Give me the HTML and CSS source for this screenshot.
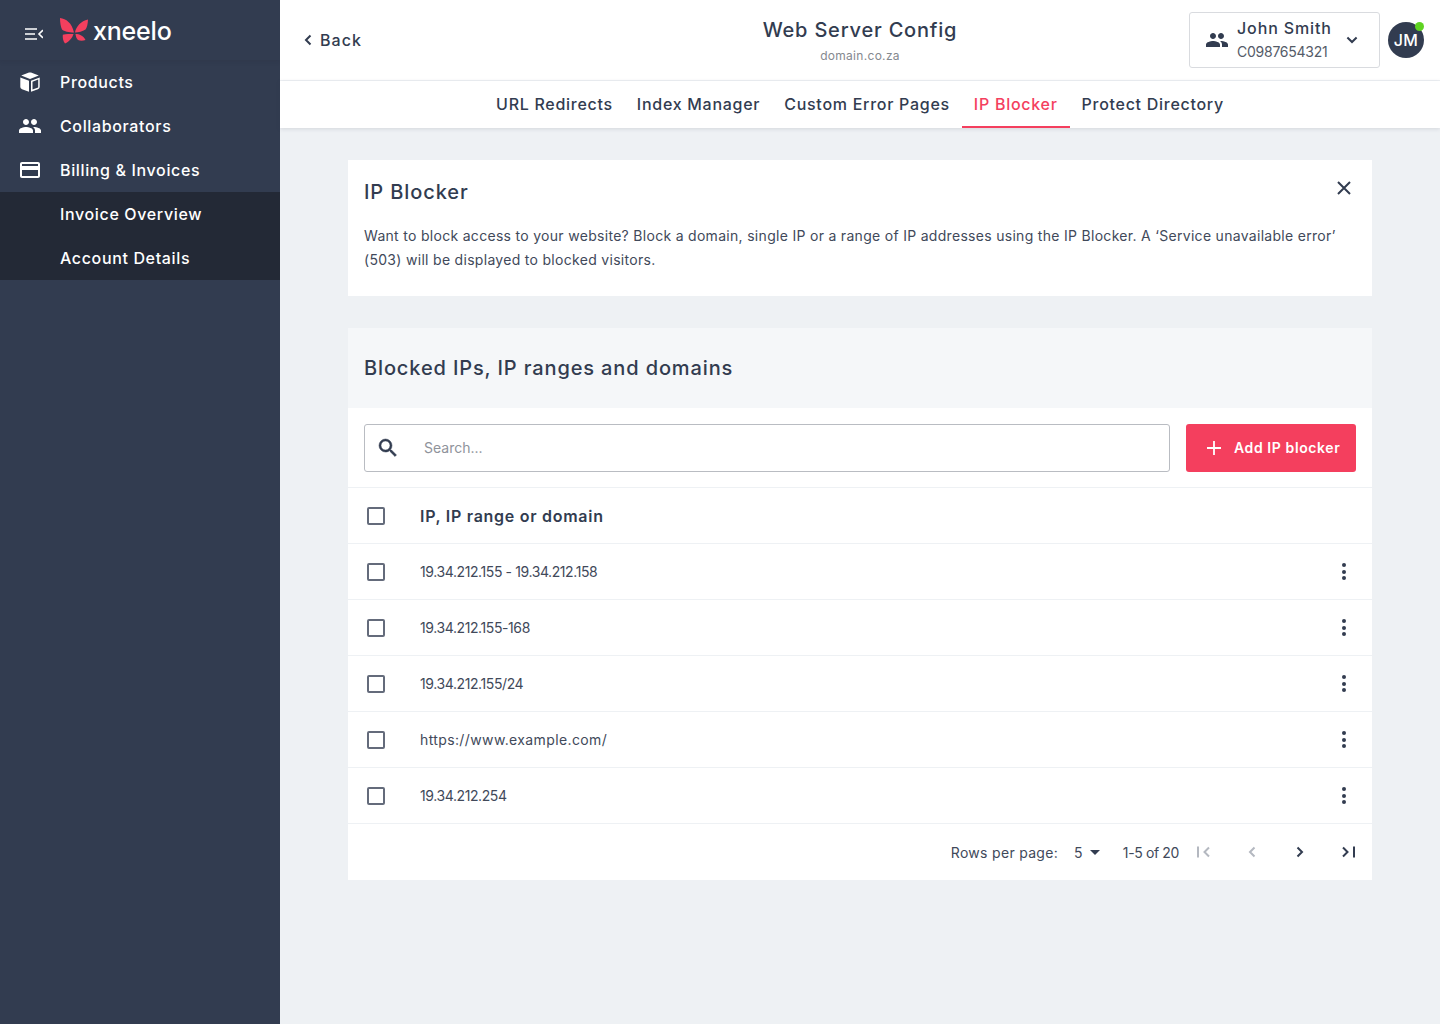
FILE: index.html
```html
<!DOCTYPE html>
<html lang="en">
<head>
<meta charset="utf-8">
<title>IP Blocker</title>
<link rel="stylesheet" href="styles.css">
</head>
<body>
<div class="app">
  <aside class="sidebar">
    <div class="brand">
      <svg class="menu-icon" width="18" height="12" viewBox="0 0 18 12"><path d="M0 1h12M0 6h10M0 11h12" stroke="#fff" stroke-width="1.6" fill="none"/><path d="M18 2.200 14 6l4 3.800" stroke="#fff" stroke-width="1.6" fill="none"/></svg>
      <svg class="logo-mark" width="29" height="27" viewBox="0 0 29 27"><path d="M0 1C6 1.500 12 6 14 15.500 9 15.500 4 14.500 2 12.500 .8 9.500 0 6 0 1zM28 2.500C27.800 7 27 10.500 25.500 12.500 22.500 14.500 18.500 15.500 15 15.500 16 9.500 21 4 28 2.500zM13.500 17C12.500 20.500 9.500 24.500 5 26.500 3 24 2.500 20.500 2.800 17.800 6 17 10 17 13.500 17zM15.500 17C19.500 17 23.500 18.800 25.500 23 23 24 20 24 18 23 16.500 21.500 15.800 19.500 15.500 17z" fill="#f43f5e"/></svg>
      <span class="logo-text">xneelo</span>
    </div>
    <nav class="nav">
      <a class="nav-item">
        <svg class="nav-icon cube" width="20" height="20" viewBox="0 0 20 20"><path d="M9 .6Q10 .2 11 .6L18.800 3.600 10 7 1.200 3.600z" fill="#fff"/><path d="M.3 5.500 9 8.800V19.800L2 17.200Q.3 16.500.3 15z" fill="#fff"/><path d="M11 8.800 19.700 5.500V15q0 1.500-1.700 2.200L11 19.800zm1.500 1v7.800l5.700-2V7.600z" fill="#fff"/></svg>
        <span>Products</span>
      </a>
      <a class="nav-item">
        <svg class="nav-icon" width="24" height="24" viewBox="0 0 24 24"><path fill="#fff" d="M16 11c1.660 0 2.990-1.340 2.990-3S17.660 5 16 5s-3 1.340-3 3 1.340 3 3 3zm-8 0c1.660 0 2.990-1.340 2.990-3S9.660 5 8 5 5 6.340 5 8s1.340 3 3 3zm0 2c-2.330 0-7 1.170-7 3.500V19h14v-2.500c0-2.330-4.670-3.500-7-3.500zm8 0c-.29 0-.62.020-.97.050 1.160.84 1.970 1.970 1.970 3.450V19h6v-2.500c0-2.330-4.670-3.500-7-3.500z"/></svg>
        <span>Collaborators</span>
      </a>
      <a class="nav-item">
        <svg class="nav-icon" width="24" height="24" viewBox="0 0 24 24"><path fill="#fff" d="M20 4H4c-1.110 0-2 .89-2 2v12c0 1.110.89 2 2 2h16c1.110 0 2-.89 2-2V6c0-1.110-.89-2-2-2zm0 14H4v-6h16v6zm0-10H4V6h16v2z"/></svg>
        <span>Billing &amp; Invoices</span>
      </a>
      <div class="subnav">
        <a class="nav-item sub">Invoice Overview</a>
        <a class="nav-item sub">Account Details</a>
      </div>
    </nav>
  </aside>
  <main class="main">
    <header class="topbar">
      <a class="back">
        <svg width="24" height="24" viewBox="0 0 24 24"><path d="M14.500 7.500 10 12l4.500 4.500" stroke="#323c50" stroke-width="2" fill="none"/></svg>
        <span>Back</span>
      </a>
      <div class="title-block">
        <h1>Web Server Config</h1>
        <p>domain.co.za</p>
      </div>
      <div class="account">
        <button class="account-picker">
          <svg width="24" height="24" viewBox="0 0 24 24"><path fill="#323c50" d="M16 11c1.660 0 2.990-1.340 2.990-3S17.660 5 16 5s-3 1.340-3 3 1.340 3 3 3zm-8 0c1.660 0 2.990-1.340 2.990-3S9.660 5 8 5 5 6.340 5 8s1.340 3 3 3zm0 2c-2.330 0-7 1.170-7 3.500V19h14v-2.500c0-2.330-4.670-3.500-7-3.500zm8 0c-.29 0-.62.020-.97.050 1.160.84 1.970 1.970 1.970 3.450V19h6v-2.500c0-2.330-4.670-3.500-7-3.500z"/></svg>
          <span class="account-text"><strong>John Smith</strong><small>C0987654321</small></span>
          <svg width="24" height="24" viewBox="0 0 24 24"><path d="M7.400 9.500 12 14l4.600-4.500" stroke="#323c50" stroke-width="2" fill="none"/></svg>
        </button>
        <div class="avatar">JM<i class="status"></i></div>
      </div>
    </header>
    <nav class="tabs">
      <a class="tab">URL Redirects</a>
      <a class="tab">Index Manager</a>
      <a class="tab">Custom Error Pages</a>
      <a class="tab active">IP Blocker</a>
      <a class="tab">Protect Directory</a>
    </nav>
    <div class="content">
      <section class="card intro">
        <div class="intro-head">
          <h2>IP Blocker</h2>
          <svg class="close" width="24" height="24" viewBox="0 0 24 24"><path d="M6 6l12 12M18 6 6 18" stroke="#323c50" stroke-width="2" fill="none"/></svg>
        </div>
        <p>Want to block access to your website? Block a domain, single IP or a range of IP addresses using the IP Blocker. A ‘Service unavailable error’ (503) will be displayed to blocked visitors.</p>
      </section>
      <section class="card table-card">
        <div class="table-title"><h2>Blocked IPs, IP ranges and domains</h2></div>
        <div class="toolbar">
          <label class="search">
            <svg width="24" height="24" viewBox="0 0 24 24"><path fill="#323c50" stroke="#323c50" stroke-width=".5" d="M15.500 14h-.79l-.28-.27A6.470 6.470 0 0 0 16 9.500 6.500 6.500 0 1 0 9.500 16c1.610 0 3.090-.59 4.230-1.570l.27.28v.79l5 4.990L20.490 19l-4.990-5zm-6 0C7.010 14 5 11.990 5 9.500S7.010 5 9.500 5 14 7.010 14 9.500 11.990 14 9.500 14z"/></svg>
            <input class="search-input" placeholder="Search...">
          </label>
          <button class="add-btn">
            <svg width="24" height="24" viewBox="0 0 24 24"><path d="M12 5v14M5 12h14" stroke="#fff" stroke-width="1.800" fill="none"/></svg>
            <span>Add IP blocker</span>
          </button>
        </div>
        <div class="row head"><i class="check"></i><span>IP, IP range or domain</span></div>
        <div class="row"><i class="check"></i><span class="num">19.34.212.155 - 19.34.212.158</span><i class="kebab"><b></b><b></b><b></b></i></div>
        <div class="row"><i class="check"></i><span class="num">19.34.212.155-168</span><i class="kebab"><b></b><b></b><b></b></i></div>
        <div class="row"><i class="check"></i><span class="num">19.34.212.155/24</span><i class="kebab"><b></b><b></b><b></b></i></div>
        <div class="row"><i class="check"></i><span>https://www.example.com/</span><i class="kebab"><b></b><b></b><b></b></i></div>
        <div class="row"><i class="check"></i><span class="num">19.34.212.254</span><i class="kebab"><b></b><b></b><b></b></i></div>
        <div class="pager">
          <span class="rows-label">Rows per page:</span>
          <span class="rows-select">5<i class="caret"></i></span>
          <span class="range">1-5 of 20</span>
          <span class="pager-btns">
            <svg width="24" height="24" viewBox="0 0 24 24"><path d="M6 6.500v11M17 7.500 12.500 12l4.500 4.500" stroke="#b4b8c0" stroke-width="2" fill="none"/></svg>
            <svg width="24" height="24" viewBox="0 0 24 24"><path d="M14.500 7.500 10 12l4.500 4.500" stroke="#b4b8c0" stroke-width="2" fill="none"/></svg>
            <svg width="24" height="24" viewBox="0 0 24 24"><path d="M9.500 7.500 14 12l-4.500 4.500" stroke="#323c50" stroke-width="2" fill="none"/></svg>
            <svg width="24" height="24" viewBox="0 0 24 24"><path d="M18 6.500v11M7 7.500 11.500 12 7 16.500" stroke="#323c50" stroke-width="2" fill="none"/></svg>
          </span>
        </div>
      </section>
    </div>
  </main>
</div>
</body>
</html>
```
FILE: styles.css
```css
* { box-sizing: border-box; }
html, body { margin: 0; height: 100%; }
body { font-family: Inter, "Liberation Sans", sans-serif; color: #323c50; background: #eef1f4; }
h1, h2, p { margin: 0; }
svg { display: block; flex: none; }
.app { display: flex; min-height: 1024px; }

.sidebar { width: 280px; flex: none; background: #323c50; color: #fff; }
.brand { height: 60px; display: flex; align-items: center; padding-left: 25px; box-shadow: 0 2px 4px rgba(30,36,50,.12); }
.menu-icon { margin-right: 17px; margin-top: 8px; }
.logo-mark { margin-right: 4px; margin-top: 1px; }
.logo-text { font-size: 25px; font-weight: 500; letter-spacing: -.2px; margin-top: 2px; }
.nav-item { height: 44px; display: flex; align-items: center; padding-left: 18px; font-size: 16px; font-weight: 500; letter-spacing: .64px; color: #fff; }
.nav-item .nav-icon { margin-right: 18px; }
.nav-item .nav-icon.cube { margin: 0 20px 0 2px; }
.subnav { background: #232936; }
.nav-item.sub { padding-left: 60px; }

.main { flex: 1; min-width: 0; }
.topbar { height: 81px; background: #fff; border-bottom: 1px solid #eef1f4; display: grid; grid-template-columns: 1fr auto 1fr; align-items: center; padding: 0 16px; }
.back { display: flex; align-items: center; font-size: 16px; font-weight: 500; letter-spacing: 1.050px; }
.title-block { text-align: center; }
.title-block h1 { font-size: 20px; font-weight: 500; letter-spacing: .8px; line-height: 28px; }
.title-block p { font-size: 12px; color: #85898f; letter-spacing: .3px; line-height: 16px; margin-top: 4px; }
.account { justify-self: end; display: flex; align-items: center; gap: 8px; }
.account-picker { width: 191px; height: 56px; background: #fff; border: 1px solid #d9dbdf; border-radius: 3px; display: flex; align-items: center; padding: 0 15px; font: inherit; color: inherit; }
.account-text { flex: 1; display: flex; flex-direction: column; align-items: flex-start; padding-left: 8px; }
.account-text strong { font-size: 16px; font-weight: 500; line-height: 24px; letter-spacing: .88px; }
.account-text small { font-size: 14px; line-height: 24px; color: #555b68; letter-spacing: -.25px; }
.avatar { position: relative; width: 36px; height: 36px; border-radius: 50%; background: #323c50; color: #fff; font-size: 16px; font-weight: 500; letter-spacing: .4px; display: flex; align-items: center; justify-content: center; }
.status { position: absolute; top: 0; right: 0; width: 9px; height: 9px; border-radius: 50%; background: #5fd321; }

.tabs { height: 47px; background: #fff; display: flex; justify-content: center; box-shadow: 0 1px 4px rgba(50,60,80,.14); position: relative; }
.tab { padding: 0 12px; display: flex; align-items: center; font-size: 16px; font-weight: 500; letter-spacing: .72px; border-bottom: 2px solid transparent; }
.tab.active { color: #f43f5e; border-bottom-color: #f43f5e; }

.content { padding: 32px 68px; display: flex; flex-direction: column; gap: 32px; }
.card { background: #fff; }
.intro { height: 136px; padding: 16px; }
.intro-head { display: flex; justify-content: space-between; align-items: center; height: 32px; }
.intro-head h2 { font-size: 20px; font-weight: 500; letter-spacing: .9px; }
.close { margin-top: -8px; }
.intro p { font-size: 14px; line-height: 24px; letter-spacing: .3px; margin-top: 16px; color: #41495a; }
.table-title { height: 80px; display: flex; align-items: center; padding: 0 16px; background: #f5f7f9; }
.table-title h2 { font-size: 20px; font-weight: 500; letter-spacing: .87px; }
.toolbar { height: 80px; padding: 16px; display: flex; gap: 16px; border-bottom: 1px solid #eef1f4; }
.search { flex: 1; height: 48px; border: 1px solid #b9bcc2; border-radius: 3px; display: flex; align-items: center; padding-left: 11px; }
.search-input { flex: 1; border: 0; outline: 0; margin-left: 24px; padding: 0 0 2px; font: inherit; font-size: 14px; letter-spacing: 0; background: transparent; min-width: 0; }
.search-input::placeholder { color: #8f939b; opacity: 1; }
.add-btn { width: 170px; height: 48px; background: #f43f5e; border: 0; border-radius: 3px; color: #fff; font: inherit; font-size: 14px; font-weight: 600; letter-spacing: .6px; display: flex; align-items: center; padding: 0 0 0 16px; gap: 8px; }
.add-btn span { margin-top: -2px; }
.row { height: 56px; border-bottom: 1px solid #eef1f4; display: flex; align-items: center; padding: 0 16px 0 19px; font-size: 14px; letter-spacing: .38px; color: #41495a; }
.row.head { font-size: 16px; font-weight: 600; letter-spacing: .72px; color: #323c50; }
.check { width: 18px; height: 18px; border: 2px solid #646b7b; border-radius: 2px; margin-right: 35px; flex: none; }
.row span { flex: 1; }
.row .num { letter-spacing: -.4px; }
.kebab { width: 24px; display: flex; flex-direction: column; align-items: center; gap: 2.500px; }
.kebab b { width: 4px; height: 4px; border-radius: 50%; background: #323c50; }
.pager { height: 56px; display: flex; align-items: center; justify-content: flex-end; padding-right: 12px; font-size: 14px; letter-spacing: .3px; color: #41495a; }
.rows-select { display: flex; align-items: center; margin-left: 16px; }
.caret { width: 0; height: 0; margin-left: 7px; border: 5px solid transparent; border-top: 5px solid #323c50; border-bottom: 0; }
.range { margin-left: 23px; letter-spacing: -.37px; }
.pager-btns { display: flex; gap: 24px; margin-left: 13px; }
```
